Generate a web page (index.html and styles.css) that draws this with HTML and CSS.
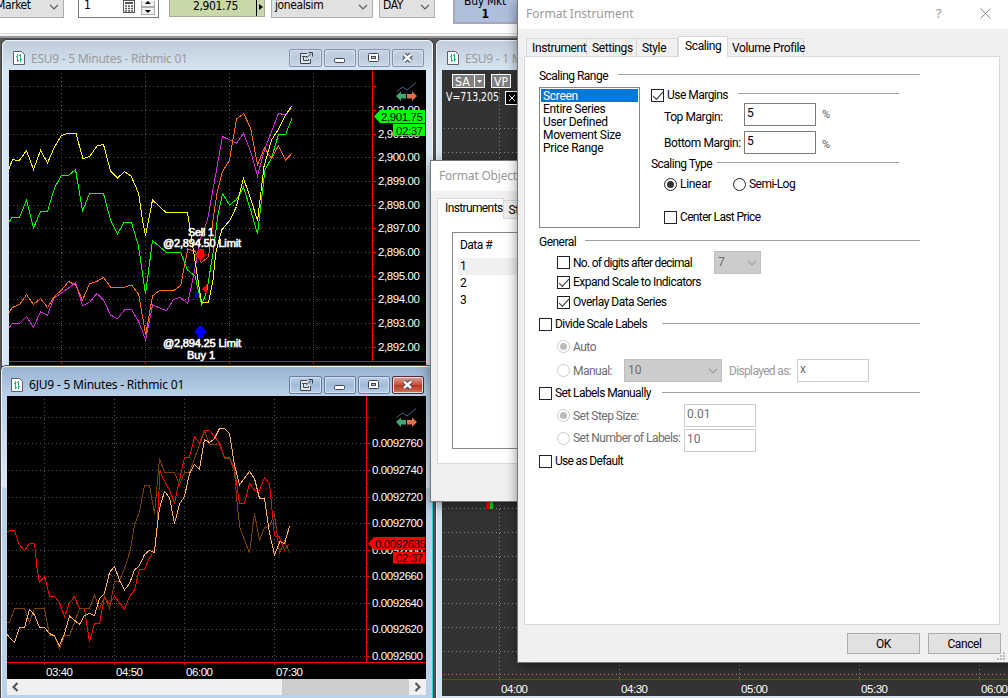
FILE: index.html
```html
<!DOCTYPE html>
<html lang="en">
  <head>
    <meta charset="UTF-8" />
    <meta name="viewport" content="width=device-width, initial-scale=1.0" />
    <title>Format Instrument</title>
    <link rel="stylesheet" href="styles.css">
  </head>
  <body>
    <!-- Shared icons -->
    <svg class="defs" width="0" height="0">
      <symbol id="i-doc" viewBox="0 0 12 14">
        <path d="M.5.5h8l3 3v10H.5z" fill="#fff" stroke="#5c6066" />
        <path d="M4.500 3v8M7.500 3v8M3 5.500h1.500M4.500 9.500H6M6 4.500h1.500M7.500 8.500H9" fill="none" stroke="#1fb573" />
      </symbol>
      <symbol id="i-pop" viewBox="0 0 14 12">
        <path d="M8 1.500H1.500v10h10V7" fill="#dde6ef" stroke="#3f4650" />
        <path d="M3 4.500h5M4.500 4v4.500h5V7" fill="none" stroke="#3f4650" />
        <path d="M7 6.500l5-5M9.500.5h4v4" fill="none" stroke="#3f4650" />
      </symbol>
      <symbol id="i-min" viewBox="0 0 12 12">
        <rect x=".5" y="6.500" width="10" height="4" rx="1" fill="#fff" stroke="#3f4656" />
      </symbol>
      <symbol id="i-max" viewBox="0 0 12 12">
        <rect x=".5" y="1.500" width="10" height="8" rx="1" fill="#fff" stroke="#3f4656" />
        <rect x="3.500" y="4.500" width="4" height="2" fill="#b9cbdf" stroke="#3f4656" />
      </symbol>
      <symbol id="i-close" viewBox="0 0 12 12">
        <path d="M2 2.500l7 6.500M9 2.500L2 9" stroke="#3f4656" stroke-width="4.600" />
        <path d="M2 2.500l7 6.500M9 2.500L2 9" stroke="#fff" stroke-width="2.400" />
      </symbol>
      <symbol id="i-down" viewBox="0 0 10 6">
        <path d="M1 .8l4 4 4-4" fill="none" stroke="currentColor" stroke-width="1.200" />
      </symbol>
      <symbol id="i-scale" viewBox="0 0 21 20">
        <path d="M.5 9.500l6-4.500 4.500 3 9-7.500" fill="none" stroke="#46608c" />
        <path d="M0 14l5-4.500V12h5v4.500H5v2.500z" fill="#43a873" />
        <path d="M21 14l-5-4.500V12h-5v4.500h5v2.500z" fill="#e26d51" />
      </symbol>
    </svg>

    <!-- Order toolbar -->
    <div class="toolbar">
      <div class="combo order-type"><span>Market</span><svg class="chev"><use href="#i-down" /></svg></div>
      <div class="qty">
        <span>1</span>
        <svg width="12" height="13" viewBox="0 0 12 13">
          <rect x=".5" y=".5" width="11" height="12" fill="#fff" stroke="#555" />
          <path d="M2 3h8" stroke="#555" stroke-width="2" />
          <path d="M2 6h8M2 8.500h8M2 11h8" stroke="#555" stroke-width="1.500" stroke-dasharray="2 1" />
        </svg>
        <div class="spin"><i class="up"></i><i class="dn"></i></div>
      </div>
      <div class="price"><span>2,901.75</span><i></i></div>
      <div class="combo account"><span>jonealsim</span><svg class="chev"><use href="#i-down" /></svg></div>
      <div class="combo tif"><span>DAY</span><svg class="chev"><use href="#i-down" /></svg></div>
      <div class="buy"><span>Buy Mkt</span><b>1</b></div>
    </div>

    <!-- ES 1 minute chart -->
    <div class="window win-es1">
      <div class="titlebar">
        <svg class="doc"><use href="#i-doc" /></svg><span>ESU9 - 1 Minute</span>
      </div>
      <svg class="chart" width="566" height="626" viewBox="442 70 566 626">
        <rect x="442" y="70" width="566" height="626" fill="#333" />
        <path class="grid light" d="M499.500 73V679M619.500 73V679M739.500 73V679M859.500 73V679M979.500 73V679M444 128.500H1008M444 152.500H1008M444 508.500H1008M444 532.500H1008M444 556.500H1008M444 579.500H1008M444 603.500H1008M444 627.500H1008M444 651.500H1008M444 674.500H1008" />
        <path class="axis" d="M442 679.500H1008M499.500 679v3M619.500 679v3M739.500 679v3M859.500 679v3M979.500 679v3" />
        <rect x="486" y="495" width="4" height="14" fill="#f00" />
        <rect x="490" y="495" width="3" height="14" fill="#0d2" />
        <g class="label">
          <text x="501" y="693" textLength="27">04:00</text>
          <text x="621" y="693" textLength="27">04:30</text>
          <text x="741" y="693" textLength="27">05:00</text>
          <text x="861" y="693" textLength="27">05:30</text>
          <text x="981" y="693" textLength="27">06:00</text>
        </g>
        <rect x="452.500" y="74.500" width="32" height="13" fill="#808080" stroke="#fff" />
        <path d="M474.500 74v14" stroke="#fff" />
        <path d="M477 80h5l-2.500 3z" fill="#fff" />
        <rect x="491.500" y="74.500" width="19" height="13" fill="#808080" stroke="#fff" />
        <rect x="505.500" y="91.500" width="13" height="13" fill="#000" stroke="#fff" />
        <path d="M509 95l6 6M515 95l-6 6" stroke="#fff" />
        <g class="label tahoma">
          <text x="455" y="85.500" textLength="15" lengthAdjust="spacingAndGlyphs">SA</text>
          <text x="494" y="85.500" textLength="14" lengthAdjust="spacingAndGlyphs">VP</text>
          <text x="446" y="101" textLength="53" lengthAdjust="spacingAndGlyphs">V=713,205</text>
        </g>
      </svg>
    </div>

    <!-- ES 5 minute chart -->
    <div class="window win-es5">
      <div class="titlebar">
        <svg class="doc"><use href="#i-doc" /></svg><span>ESU9 - 5 Minutes - Rithmic 01</span>
        <div class="controls">
          <a><svg class="pop"><use href="#i-pop" /></svg></a><a><svg><use href="#i-min" /></svg></a><a><svg><use href="#i-max" /></svg></a><a><svg><use href="#i-close" /></svg></a>
        </div>
      </div>
      <svg class="chart" width="417" height="295" viewBox="9 70 417 295">
        <rect x="9" y="70" width="417" height="295" fill="#000" />
        <path class="grid" d="M61.500 73V361M145.500 73V361M229.500 73V361M313.500 73V361M9 86.500H372M9 110.500H372M9 134.500H372M9 157.500H372M9 181.500H372M9 205.500H372M9 228.500H372M9 252.500H372M9 276.500H372M9 299.500H372M9 323.500H372M9 347.500H372" />
        <path class="axis" d="M372.500 70V361M9 361.500H426M61.500 361v3M145.500 361v3M229.500 361v3M313.500 361v3M372 86.500h4M372 110.500h4M372 134.500h4M372 157.500h4M372 181.500h4M372 205.500h4M372 228.500h4M372 252.500h4M372 276.500h4M372 299.500h4M372 323.500h4M372 347.500h4M372 98.500h2M372 122.500h2M372 146.500h2M372 169.500h2M372 193.500h2M372 217.500h2M372 240.500h2M372 264.500h2M372 288.500h2M372 311.500h2M372 335.500h2M372 359.500h2" />
        <g class="series">
          <polyline stroke="#d02bd8" points="9,327.700 12.500,323.300 20,323.300 26.500,316.500 33.500,327.500 40.500,311.700 47.500,315 54,298 61.500,293 75.700,282.700 82.500,305.500 89.500,302.500 96.700,293.500 103.700,300 110.500,315 117.500,318.700 124.700,309.700 131.700,309.700 138.700,321.700 145.700,340 152.500,305 166.500,310.700 173.500,299.500 180.500,297.300 187.700,303.500 194.700,270 200,240 207.500,220 222.500,136.500 236.500,143.300 243.500,133.300 250.700,151.700 257.500,175.700 264.500,150 278.500,113.300 285.700,115 291.700,107.700" />
          <polyline stroke="#ff6a1f" points="9,312.500 12.500,307.500 20,304 26.500,294.500 33.500,304.500 40.500,298.500 47.500,307.500 54,297 61.500,290 68.500,281.500 75.700,285 82.500,300 89.500,284 96.700,281.500 103.500,277.500 110.500,287 124.700,287 131.700,285 138.700,294.500 145.700,335 152.500,296 159.500,290.500 173.700,290.500 180.700,285.500 187.700,249 194.700,251 201.500,262.500 208.500,256.700 213,220 217,193 222.500,171.500 229.500,160 236.500,119 243.700,113.500 250.700,128.500 257.500,165 264.500,147.700 271.500,158.500 278.500,145.700 285.700,160 291.700,153.500" />
          <polyline stroke="#0f0" points="9,222 12,217.500 19.500,217.500 26.500,200 33.500,228 40.500,211.500 47.500,211.500 54.500,188 61.500,175.500 68.500,175.500 75.500,169.500 82.500,211 89.500,193.500 103.500,193.500 110.500,220 117.500,234 124,222.500 131.500,222.500 138.500,246 145.500,294 152.500,240.500 166,252 180.500,252 187.500,270 195,276 201.700,305 207,290 212.700,255 218,215 222.500,193.500 229.500,205 236.500,199.500 243.500,187.500 250.700,210 257.500,234 265,170 271.500,158 278.500,134.500 285.700,134.500 292,118" />
          <polyline stroke="#ff0" points="9,169 12.500,159.500 19,161 26.500,150.500 33.500,169.500 40.500,150.500 47.500,163 54.500,147 61.500,135.500 68,133.500 76,133.500 83,159 90,156 97,146 103.500,144.500 110.500,171 117.500,178 124.500,171.500 131,176 138.500,193 142.500,220 145.500,236 152.500,200 166,212.500 187.500,212.500 191,235 201.500,302.500 208.500,302.500 213,280 215.700,253 221.700,230 230,220 236.500,206.500 243.500,178.500 250.500,198 257.500,221 264,166.500 271.500,140 278,130 285.500,115 291.700,106" />
        </g>
        <path d="M198 249h6v5h2.500l-6 7-6-7h3.500z" fill="#f00" />
        <path d="M207 284v10l-5-5z" fill="#f00" />
        <path d="M195 290v9l4-4.500z" fill="#00f" />
        <path d="M200.500 325l6 6-1 3h-2v4h-6v-4h-2l-1-3z" fill="#00f" />
        <g class="label order">
          <text x="188" y="236" textLength="26">Sell 1</text>
          <text x="163" y="247" textLength="78">@2,894.50 Limit</text>
          <text x="163" y="347" textLength="78">@2,894.25 Limit</text>
          <text x="187" y="359" textLength="28">Buy 1</text>
        </g>
        <g class="label">
          <text x="378" y="114" textLength="42">2,902.00</text>
          <text x="378" y="138" textLength="42">2,901.00</text>
          <text x="378" y="161" textLength="42">2,900.00</text>
          <text x="378" y="185" textLength="42">2,899.00</text>
          <text x="378" y="209" textLength="42">2,898.00</text>
          <text x="378" y="232" textLength="42">2,897.00</text>
          <text x="378" y="256" textLength="42">2,896.00</text>
          <text x="378" y="280" textLength="42">2,895.00</text>
          <text x="378" y="303" textLength="42">2,894.00</text>
          <text x="378" y="327" textLength="42">2,893.00</text>
          <text x="378" y="351" textLength="42">2,892.00</text>
        </g>
        <path d="M374 116.500l6-6.500H425v13H380zM393 124h32v12h-32z" fill="#0f0" />
        <g class="label dark">
          <text x="381" y="121" textLength="42">2,901.75</text>
          <text x="396" y="135" textLength="27">02:37</text>
        </g>
        <use href="#i-scale" x="396" y="82" width="21" height="20" />
      </svg>
    </div>

    <!-- 6J 5 minute chart -->
    <div class="window win-6j active">
      <div class="titlebar">
        <svg class="doc"><use href="#i-doc" /></svg><span>6JU9 - 5 Minutes - Rithmic 01</span>
        <div class="controls">
          <a><svg class="pop"><use href="#i-pop" /></svg></a><a><svg><use href="#i-min" /></svg></a><a><svg><use href="#i-max" /></svg></a><a class="close"><svg><use href="#i-close" /></svg></a>
        </div>
      </div>
      <svg class="chart" width="419" height="283" viewBox="7 396 419 283">
        <rect x="7" y="396" width="419" height="283" fill="#000" />
        <path class="grid" d="M44.500 399V662M114.500 399V662M184.500 399V662M274.500 399V662M8 417.500H366M8 443.500H366M8 470.500H366M8 497.500H366M8 523.500H366M8 550.500H366M8 576.500H366M8 603.500H366M8 629.500H366M8 656.500H366" />
        <path class="axis" d="M366.500 396V662M7 662.500H426M44.500 662v3M114.500 662v3M184.500 662v3M274.500 662v3M366 417.500h4M366 443.500h4M366 470.500h4M366 497.500h4M366 523.500h4M366 550.500h4M366 576.500h4M366 603.500h4M366 629.500h4M366 656.500h4M366 430.500h2M366 457.500h2M366 483.500h2M366 510.500h2M366 537.500h2M366 563.500h2M366 589.500h2M366 616.500h2M366 642.500h2" />
        <g class="series">
          <polyline stroke="#f00" points="7,532 9.500,530.500 14.500,530.500 19,544 24.500,550.500 29.500,543.500 34.500,543.500 37,568 39.500,582.500 44.500,576.500 49.500,596 54.500,596 59.500,603 64.500,616.500 69.500,603 74.500,596.500 79.500,608.500 84.500,609 89.500,642 94.500,623.500 99.500,623.500 104.500,596.500 109.500,604 114.500,596.500 124.500,609 129.500,596.500 134.500,590 139.500,569 144.500,569 149.500,558 154.500,550.500 157,530 160,471 164.500,481.500 169.500,490 174.500,503 179.500,480 184.500,457.500 189.500,457.500 194.500,437 199.500,443 204.500,430 209.500,430 214.500,436.700 219.500,443 224.500,457.500 229.500,457.500 234.500,468.500 239.500,503.500 244.500,503.500 249.500,483.500 254.500,490 259.500,490 264.500,477.500 269.500,483.500 274.500,536 279,536.500 284.500,550 288.700,544" />
          <polyline stroke="#7b3f00" points="7,622.500 9.500,622.500 14.500,608.500 24.500,608.500 29.500,622.500 34.500,608.500 44.500,608.500 49.500,635.500 54.500,635.500 59.500,649 64.500,635.500 69.500,635.500 74.500,622.500 79.500,608.500 89.500,608.500 94.500,595 99.500,609 104.500,596.500 109.500,608.500 114.500,581.500 119.500,581.500 124.500,568.500 130,551.500 134.500,525 139.500,511.500 144.500,485.500 149.500,485.500 154.500,513.500 159.500,458.500 164.500,472.500 174.500,472.500 179.500,485 184.500,472.500 189.500,472.500 204.500,431 209.500,444.500 219.500,444.500 224.500,458 229.500,458 234.500,471.500 237.500,508 240,528 249.500,553 254.500,513.500 259.500,540 264.500,527.500 269.500,526.500 274.500,513.500 279.500,553 284.500,541.500 289.700,552.500" />
          <polyline stroke="#ffb066" points="7,634 9.500,637.500 14.500,642.500 19.500,627.500 24.500,627.500 29.500,609.500 34.500,615 39.500,627.500 44.500,627.500 49.500,633.500 54.500,636 59.500,645.500 64.500,633.500 69.500,616 79.500,624.500 84.500,615.500 89.500,613.500 94.500,615.500 99.500,598.500 104.500,593.500 109.500,572.500 114.500,566.500 119.500,580.500 124.500,590 129.500,583.500 134.500,570 139.500,565.500 144.500,554.500 149.500,550.500 154.500,552.500 156.700,530 159.500,508.500 164.500,491.500 169.500,497.500 174.500,523.500 179.500,504 184.500,496.500 189.500,473.500 194.500,464.500 199.500,469.500 204.500,439.500 209.500,442.700 214.500,438.500 219.500,428.500 224.500,428.500 229.500,433.500 234.500,465 239.500,485 249.500,471.500 254.500,478.500 259.500,498.500 264.500,498.500 269.500,533 274.500,555 280,541.500 284.500,543.500 289.500,526.500" />
        </g>
        <g class="label">
          <text x="372" y="447" textLength="51">0.0092760</text>
          <text x="372" y="474" textLength="51">0.0092740</text>
          <text x="372" y="501" textLength="51">0.0092720</text>
          <text x="372" y="527" textLength="51">0.0092700</text>
          <text x="372" y="554" textLength="51">0.0092680</text>
          <text x="372" y="580" textLength="51">0.0092660</text>
          <text x="372" y="607" textLength="51">0.0092640</text>
          <text x="372" y="633" textLength="51">0.0092620</text>
          <text x="372" y="660" textLength="51">0.0092600</text>
          <text x="46" y="676" textLength="27">03:40</text>
          <text x="116" y="676" textLength="27">04:50</text>
          <text x="186" y="676" textLength="27">06:00</text>
          <text x="276" y="676" textLength="27">07:30</text>
        </g>
        <path d="M368 543.500l6-6.500H425v13H374zM393 552h32v11.500h-32z" fill="#f00" />
        <g class="label dark">
          <text x="375" y="548" textLength="51">0.0092685</text>
          <text x="396" y="562" textLength="27">02:37</text>
        </g>
        <use href="#i-scale" x="396" y="408" width="21" height="20" />
      </svg>
      <div class="scrollbar">
        <svg width="17" height="16"><path d="M10.500 4L6.500 8l4 4" fill="none" stroke="#505050" stroke-width="2" /></svg>
        <div class="thumb"></div>
        <svg width="17" height="16"><path d="M6.500 4l4 4-4 4" fill="none" stroke="#505050" stroke-width="2" /></svg>
      </div>
    </div>

    <!-- Format Objects dialog -->
    <div class="dialog objects">
      <div class="caption">Format Objects</div>
      <div class="tabs"><span class="tab current">Instruments</span><span class="tab">Strategies</span></div>
      <div class="page">
        <div class="table">
          <div class="head">Data #</div>
          <div class="line selected">1</div>
          <div class="line">2</div>
          <div class="line">3</div>
        </div>
      </div>
    </div>

    <!-- Format Instrument dialog -->
    <div class="dialog instrument">
      <div class="caption">
        <span class="name">Format Instrument</span>
        <span class="help">?</span>
        <svg width="11" height="11"><path d="M.5.5l10 10M10.500.5l-10 10" stroke="#888" /></svg>
      </div>
      <div class="tabs">
        <span class="tab t-instrument">Instrument</span><span class="tab t-settings">Settings</span><span class="tab t-style">Style</span><span class="tab current t-scaling">Scaling</span><span class="tab t-volume">Volume Profile</span>
      </div>
      <div class="page">
        <div class="group range"><span>Scaling Range</span><hr></div>
        <div class="columns">
          <ul class="listbox">
            <li class="selected">Screen</li>
            <li>Entire Series</li>
            <li>User Defined</li>
            <li>Movement Size</li>
            <li>Price Range</li>
          </ul>
          <div class="options">
            <div class="group use-margins"><i class="check on"></i><span>Use Margins</span><hr></div>
            <div class="field top-margin"><label>Top Margin:</label><div class="input">5</div><span class="pct">%</span></div>
            <div class="field bottom-margin"><label>Bottom Margin:</label><div class="input">5</div><span class="pct">%</span></div>
            <div class="group scaling-type"><span>Scaling Type</span><hr></div>
            <div class="row radios"><i class="radio on"></i><span class="linear">Linear</span><i class="radio"></i><span>Semi-Log</span></div>
            <div class="row center-last"><i class="check"></i><span>Center Last Price</span></div>
          </div>
        </div>
        <div class="group general"><span>General</span><hr></div>
        <div class="row sub digits"><i class="check"></i><span>No. of digits after decimal</span><div class="select small">7<svg class="chev"><use href="#i-down" /></svg></div></div>
        <div class="row sub expand"><i class="check on"></i><span>Expand Scale to Indicators</span></div>
        <div class="row sub overlay"><i class="check on"></i><span>Overlay Data Series</span></div>
        <div class="group divide"><i class="check"></i><span>Divide Scale Labels</span><hr></div>
        <div class="row sub disabled auto"><i class="radio on"></i><span>Auto</span></div>
        <div class="row sub disabled manual"><i class="radio"></i><span>Manual:</span><div class="select">10<svg class="chev"><use href="#i-down" /></svg></div><em>Displayed as:</em><div class="input">x</div></div>
        <div class="group set-labels"><i class="check"></i><span>Set Labels Manually</span><hr></div>
        <div class="row sub disabled step"><i class="radio on"></i><span>Set Step Size:</span><div class="input">0.01</div></div>
        <div class="row sub disabled number"><i class="radio"></i><span>Set Number of Labels:</span><div class="input">10</div></div>
        <div class="row default"><i class="check"></i><span>Use as Default</span></div>
      </div>
      <div class="buttons"><a>OK</a><a>Cancel</a></div>
      <svg class="grip" width="9" height="9"><path d="M6 0h2v2H6zM6 3h2v2H6zM6 6h2v2H6zM3 3h2v2H3zM3 6h2v2H3zM0 6h2v2H0z" fill="#bbb" /></svg>
    </div>
  </body>
</html>
```
FILE: styles.css
```css
* {
  box-sizing: border-box;
}
body {
  position: relative;
  width: 1008px;
  height: 698px;
  margin: 0;
  overflow: hidden;
  background: #58585a;
  font-family: Roboto, "Liberation Sans", sans-serif;
  font-size: 12px;
  color: #000;
}
.defs {
  position: absolute;
}

/* Toolbar */
.toolbar {
  display: flex;
  align-items: flex-start;
  height: 39px;
  background: linear-gradient(#fff 33px, #ddd 33px, #ddd 34px, #f4f4f4 34px, #f4f4f4 36px, #999 36px, #999 38px, #555 38px);
  font-family: "DejaVu Sans Condensed", "DejaVu Sans", sans-serif;
  font-size: 12px;
}
.combo {
  display: flex;
  justify-content: space-between;
  height: 18px;
  padding: 0 4px 0 3px;
  background: #e1e1e1;
  border: 1px solid #adadad;
  border-top: 0;
  line-height: 11px;
  letter-spacing: -0.4px;
}
.chev {
  width: 10px;
  height: 6px;
  margin-top: 4px;
  color: #555;
}
.order-type {
  width: 70px;
  margin-left: -6px;
  padding-left: 1px;
}
.qty {
  display: flex;
  width: 81px;
  height: 18px;
  margin-left: 14px;
  padding-left: 5px;
  border: 1px solid #7a7a7a;
  border-top: 0;
  line-height: 10px;
}
.qty svg {
  margin-left: 32px;
}
.spin {
  margin-left: 6px;
  width: 14px;
}
.spin i {
  display: block;
  height: 8px;
  border: 1px solid #adadad;
  background: #f0f0f0;
}
.spin .up {
  height: 6px;
  border-top: 0;
}
.spin i::after {
  content: "";
  display: block;
  width: 6px;
  height: 3px;
  margin: 2px auto 0;
  background: #000;
  clip-path: polygon(0 0, 100% 0, 50% 100%);
}
.spin .up::after {
  margin-top: 1px;
  clip-path: polygon(50% 0, 100% 100%, 0 100%);
}
.price {
  display: flex;
  width: 96px;
  height: 17px;
  margin-left: 10px;
  background: #c9d8a8;
  border: 1px solid #a4aa96;
  border-top: 0;
  line-height: 13px;
  letter-spacing: -0.4px;
}
.price span {
  width: 87px;
  padding-left: 23px;
  border-right: 1px solid #000;
}
.price i {
  width: 4px;
  height: 6px;
  margin: 4px 0 0 2px;
  background: #000;
  clip-path: polygon(0 0, 100% 50%, 0 100%);
}
.account {
  width: 102px;
  margin-left: 6px;
}
.tif {
  width: 56px;
  margin-left: 6px;
}
.buy {
  width: 66px;
  height: 24px;
  margin-left: 18px;
  padding-right: 2px;
  background: #afbedd;
  border: 2px solid #a2a9b8;
  border-top: 0;
  text-align: center;
  letter-spacing: -0.3px;
}
.buy span,
.buy b {
  display: block;
  height: 13px;
  line-height: 14px;
}
.buy span {
  margin-top: -6px;
}

/* Chart windows */
.window {
  position: absolute;
  background: #d7e4f2;
  border: 1px solid #eef4fa;
  border-radius: 5px 5px 0 0;
  box-shadow: 0 0 0 1px #444;
}
.titlebar {
  display: flex;
  align-items: center;
  height: 29px;
  padding: 5px 1px 0 10px;
  background: linear-gradient(#bfcddb, #d7e4f2);
  border-radius: 5px 5px 0 0;
  color: #9a9a9a;
  font-family: "Noto Sans", "Open Sans", sans-serif;
  font-size: 12px;
  letter-spacing: -0.25px;
  white-space: nowrap;
}
.doc {
  width: 12px;
  height: 14px;
  margin-right: 6px;
}
.controls {
  display: flex;
  gap: 2px;
  margin-left: auto;
}
.controls a {
  display: flex;
  align-items: center;
  justify-content: center;
  width: 32px;
  height: 18px;
  border: 1px solid #8493ad;
  border-radius: 2px;
  background: linear-gradient(#c6d3e1, #bccbdc 50%, #cad8e7);
  box-shadow: inset 0 0 0 1px #d4dfeb;
}
.controls a:first-child {
  width: 33px;
}
.controls svg {
  width: 12px;
  height: 12px;
}
.controls .pop {
  width: 14px;
}
.chart {
  display: block;
}
.win-es5 {
  left: 2px;
  top: 40px;
  width: 431px;
  height: 326px;
}
.win-es5 .chart {
  margin: 0 6px;
}
.win-es5 .controls {
  margin-right: 7px;
}
.win-es1 {
  left: 436px;
  top: 40px;
  width: 580px;
  height: 670px;
}
.win-es1 .chart {
  margin-left: 5px;
}
.win-6j {
  left: 1px;
  top: 366px;
  width: 432px;
  height: 340px;
  background: linear-gradient(#b9d1ea 30px, #dce8f6 120px, #b9d1ea 121px);
  border-right-color: #2fd0ea;
}
.win-6j .titlebar {
  background: linear-gradient(#98b3d0, #b9d1ea);
  color: #000;
  padding-left: 9px;
  padding-top: 6px;
  letter-spacing: -0.2px;
}
.win-6j .controls {
  margin-right: 7px;
}
.win-6j .controls a {
  background: linear-gradient(#bfd2e8, #a0bad7 50%, #b8d0ea);
  border-color: #647da1;
}
.win-6j .controls .close {
  background: linear-gradient(#e0a295, #c65443 48%, #b8341f 52%, #d8795f);
  border-color: #5b2a32;
}
.win-6j .chart {
  margin-left: 5px;
}
.scrollbar {
  display: flex;
  width: 419px;
  height: 16px;
  margin-left: 5px;
  background: #f0f0f0;
}
.thumb {
  width: 127px;
  margin-left: auto;
  background: #cdcdcd;
}
.grid {
  fill: none;
  stroke: #555;
  stroke-dasharray: 1 3;
  shape-rendering: crispEdges;
}
.grid.light {
  stroke: #8a8a8a;
}
.axis {
  fill: none;
  stroke: #f00;
  shape-rendering: crispEdges;
}
.series {
  fill: none;
  shape-rendering: crispEdges;
}
.label {
  fill: #fff;
  font-family: "Liberation Sans", Arial, sans-serif;
  font-size: 11.5px;
}
.label.dark {
  fill: #000;
}
.label.order {
  font-size: 11px;
  stroke: #fff;
  stroke-width: 0.6px;
}
.label.tahoma {
  font-family: "DejaVu Sans Condensed", sans-serif;
  font-size: 11.5px;
}

/* Dialogs */
.dialog {
  position: absolute;
  background: #f0f0f0;
  box-shadow: 0 0 0 1px #77777a, 0 3px 12px rgba(0, 0, 0, 0.5);
  letter-spacing: -0.52px;
  white-space: nowrap;
}
.caption {
  display: flex;
  align-items: center;
  padding-bottom: 2px;
  background: #fff;
  color: #999;
  font-family: "Noto Sans", "Open Sans", sans-serif;
  font-size: 12px;
  letter-spacing: -0.55px;
}
.tabs {
  display: flex;
  align-items: flex-end;
}
.tab {
  height: 18px;
  padding-left: 5px;
  border: 1px solid #d9d9d9;
  border-width: 1px 1px 0 0;
  line-height: 19px;
  letter-spacing: -0.38px;
}
.tab.current {
  position: relative;
  height: 21px;
  margin-bottom: -1px;
  border-left-width: 1px;
  background: #fff;
}
.page {
  background: #fff;
  border: 1px solid #d9d9d9;
}
.objects {
  left: 431px;
  top: 161px;
  width: 100px;
  height: 340px;
}
.objects .caption {
  height: 30px;
  padding-left: 8px;
  letter-spacing: -0.2px;
}
.objects .tabs {
  height: 27px;
  padding-left: 6px;
}
.objects .current {
  width: 69px;
  padding-left: 7px;
  letter-spacing: -0.62px;
}
.objects .page {
  width: 94px;
  height: 246px;
  margin-left: 6px;
  padding: 13px 0 0 14px;
}
.table {
  height: 217px;
  padding: 4px 0 0 5px;
  border: 1px solid #828790;
}
.head {
  height: 21px;
  padding-left: 2px;
  line-height: 17px;
}
.line {
  height: 17px;
  padding-left: 2px;
  line-height: 17px;
}
.line.selected {
  background: #f0f0f0;
}
.instrument {
  left: 518px;
  top: -1px;
  width: 500px;
  height: 663px;
}
.instrument .caption {
  height: 30px;
  padding-left: 8px;
  letter-spacing: 0;
}
.name {
  width: 410px;
  letter-spacing: -0.5px;
  letter-spacing: 0;
}
.help {
  width: 8px;
  font-size: 13px;
}
.instrument .caption svg {
  margin-left: 36px;
}
.instrument .tabs {
  height: 27px;
  padding-left: 8px;
}
.instrument .tab:first-child {
  border-left-width: 1px;
}
.t-instrument { width: 61px; }
.t-settings { width: 50px; }
.t-style { width: 41px; }
.t-scaling { width: 50px; padding-left: 6px; }
.t-volume { width: 76px; padding-left: 4px; }
.instrument .page {
  width: 476px;
  height: 569px;
  margin-left: 6px;
  padding: 9px 0 0 14px;
}
.row,
.group,
.field {
  display: flex;
  align-items: center;
}
.group {
  width: 381px;
  height: 20px;
}
.group hr {
  flex: 1;
  height: 1px;
  margin: 0 0 3px;
  border: 0;
  background: #a0a0a0;
}
.range span { width: 79px; }
.general span { width: 46px; }
.columns {
  display: flex;
  gap: 11px;
  height: 146px;
  padding-top: 1px;
}
.listbox {
  width: 101px;
  height: 141px;
  margin: 0;
  padding: 1px;
  border: 1px solid #828790;
  list-style: none;
  letter-spacing: -0.32px;
}
.listbox li {
  height: 13px;
  padding-left: 2px;
  line-height: 14px;
}
.listbox .selected {
  background: #0078d7;
  color: #fff;
}
.options .group {
  width: 248px;
}
.options .use-margins {
  height: 16px;
}
.use-margins span { width: 71px; }
.scaling-type span { width: 66px; }
.check,
.radio {
  flex: none;
  width: 13px;
  height: 13px;
  margin-right: 3px;
  border: 1px solid #222;
  background: #fff;
}
.check.on::after {
  content: "";
  display: block;
  width: 9px;
  height: 4px;
  margin: 2px 0 0 1px;
  border: solid #333;
  border-width: 0 0 1.5px 1.5px;
  transform: rotate(-48deg);
}
.radio {
  border-radius: 50%;
}
.radio.on {
  padding: 2px;
  background: #333 content-box;
}
.input {
  width: 72px;
  height: 23px;
  padding-left: 2px;
  border: 1px solid #7a7a7a;
  background: #fff;
  line-height: 19px;
  letter-spacing: 0;
}
.field {
  height: 23px;
  padding-left: 13px;
  letter-spacing: -0.42px;
}
.field label {
  width: 80px;
  padding-top: 5px;
}
.bottom-margin {
  margin-top: 5px;
}
.bottom-margin label {
  padding-top: 1px;
}
.pct {
  margin-left: 6px;
  color: #555;
  font-size: 11px;
}
.bottom-margin .pct {
  padding-top: 3px;
}
.radios {
  height: 20px;
  padding-left: 13px;
}
.linear {
  width: 53px;
  letter-spacing: -0.3px;
}
.center-last {
  height: 20px;
  margin-top: 13px;
  padding-left: 13px;
  letter-spacing: -0.65px;
}
.general {
  height: 19px;
}
.sub {
  padding-left: 18px;
}
.digits { height: 23px; }
.digits span {
  width: 141px;
  letter-spacing: -0.72px;
}
.expand { height: 16px; }
.overlay { height: 24px; }
.divide span,
.set-labels span {
  width: 101px;
}
.divide,
.set-labels {
  letter-spacing: -0.58px;
}
.divide hr,
.set-labels hr {
  margin-left: 6px;
  margin-bottom: 2px;
}
.auto { height: 25px; }
.manual { height: 23px; }
.manual > span { width: 51px; }
.set-labels { height: 22px; }
.step { height: 23px; }
.step span,
.number span { width: 111px; }
.number {
  height: 23px;
  margin-top: 2px;
}
.number i,
.number span {
  margin-bottom: 5px;
}
.default {
  height: 18px;
  letter-spacing: -0.68px;
}
.select {
  display: flex;
  justify-content: space-between;
  width: 98px;
  height: 23px;
  padding: 0 3px;
  border: 1px solid #bfbfbf;
  background: #ccc;
  color: #6d6d6d;
  line-height: 20px;
  letter-spacing: 0;
}
.select.small {
  width: 47px;
}
.select .chev {
  margin-top: 8px;
  color: #999;
}
.manual em {
  width: 68px;
  margin-left: 7px;
  color: #999;
  font-style: normal;
  letter-spacing: -0.65px;
}
.disabled {
  color: #6d6d6d;
}
.disabled .radio,
.disabled .input {
  border-color: #ccc;
}
.disabled .radio.on {
  background-color: #bbb;
}
.buttons {
  display: flex;
  justify-content: flex-end;
  gap: 8px;
  padding: 8px 17px 0 0;
  letter-spacing: -0.4px;
}
.buttons a {
  width: 73px;
  height: 21px;
  border: 1px solid #adadad;
  background: #e1e1e1;
  line-height: 20px;
  text-align: center;
}
.grip {
  position: absolute;
  left: 479px;
  top: 653px;
}
```
